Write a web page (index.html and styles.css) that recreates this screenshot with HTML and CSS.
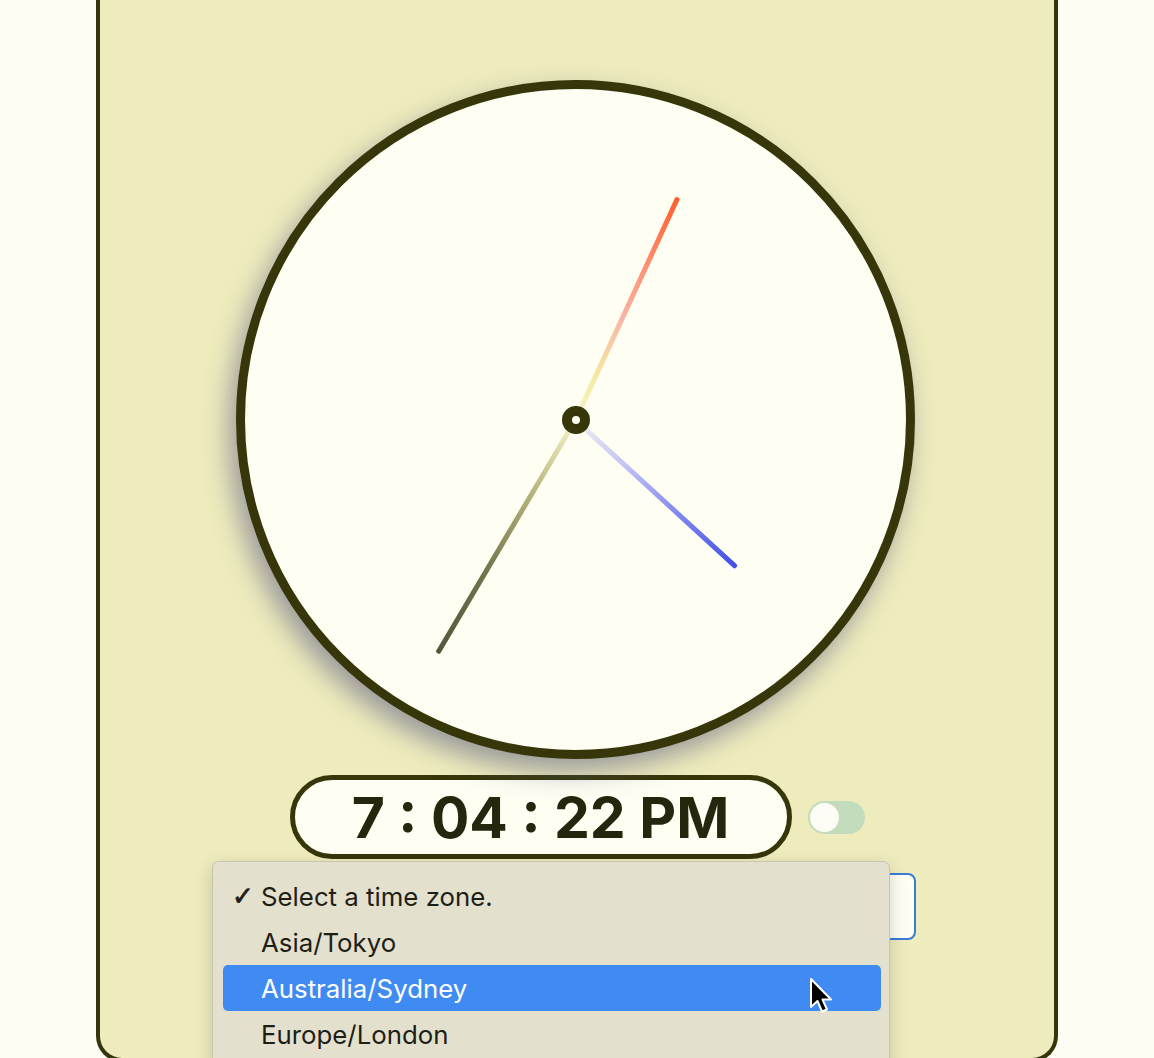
FILE: index.html
```html
<!DOCTYPE html>
<html lang="en">
<head>
<meta charset="utf-8">
<title>World Clock</title>
<link rel="stylesheet" href="styles.css">
</head>
<body>
  <main class="card">
    <div class="clock">
      <div class="hand hand-hour" style="height:271px; transform:rotate(210.6deg)"></div>
      <div class="hand hand-minute" style="height:245px; transform:rotate(24.7deg)"></div>
      <div class="hand hand-second" style="height:218px; transform:rotate(132.5deg)"></div>
      <div class="pivot"></div>
    </div>

    <div class="readout-row">
      <div class="readout">7 : 04 : 22 PM</div>
      <div class="toggle"><span class="knob"></span></div>
    </div>

    <div class="select-wrap">
      <div class="select" aria-label="Select a time zone."></div>
      <div class="menu">
        <div class="menu-item"><span class="check">✓</span>Select a time zone.</div>
        <div class="menu-item"><span class="check"></span>Asia/Tokyo</div>
        <div class="menu-item is-active"><span class="check"></span>Australia/Sydney</div>
        <div class="menu-item"><span class="check"></span>Europe/London</div>
        <svg class="cursor" width="24" height="38" viewBox="0 0 24 38">
          <path d="M2 2 L2 30 L8.5 24 L13 34.5 L18 32.5 L13.5 22.5 L22 22.5 Z" fill="#000" stroke="#fff" stroke-width="2" stroke-linejoin="round"/>
        </svg>
      </div>
    </div>
  </main>
</body>
</html>
```

FILE: styles.css
```css
html, body {
  margin: 0;
  padding: 0;
  overflow: hidden;
}

body {
  background: #fdfdf3;
  font-family: Inter, "Noto Sans", "Liberation Sans", sans-serif;
  color: #2a2a12;
}

.card {
  box-sizing: border-box;
  width: 962px;
  height: 1062px;
  margin: 0 auto;
  padding-top: 80px;
  background: #eeecbd;
  border: 4px solid #35350c;
  border-top: 0;
  border-radius: 0 0 26px 26px;
  display: flex;
  flex-direction: column;
  align-items: center;
}

.clock {
  position: relative;
  box-sizing: border-box;
  width: 679px;
  height: 679px;
  margin-left: -3px;
  border-radius: 50%;
  border: 9px solid #36360a;
  background: #fefef2;
  box-shadow: -7px 12px 26px rgba(85, 85, 125, 0.55);
  flex-shrink: 0;
}

.hand {
  position: absolute;
  left: 50%;
  bottom: 50%;
  width: 5px;
  margin-left: -2.5px;
  transform-origin: 50% 100%;
  border-radius: 2px;
}

.hand-hour {
  background: linear-gradient(to bottom, #55553c 0%, #74744f 35%, #b9b77e 70%, rgba(242, 236, 160, 0.5) 100%);
}

.hand-minute {
  background: linear-gradient(to bottom, #ff5d2e 0%, #ff8f6e 30%, #f9b6a8 55%, #f5e9a0 80%, rgba(245, 236, 160, 0.5) 100%);
}

.hand-second {
  background: linear-gradient(to bottom, #3f4ee6 0%, #7d86ee 35%, #c4c6f2 70%, rgba(225, 225, 245, 0.5) 100%);
}

.pivot {
  position: absolute;
  left: 50%;
  top: 50%;
  box-sizing: border-box;
  width: 28px;
  height: 28px;
  margin: -14px 0 0 -14px;
  border-radius: 50%;
  border: 10px solid #36360a;
  background: #fefef2;
}

.readout-row {
  display: flex;
  align-items: center;
  gap: 16px;
  margin-top: 16px;
}

.readout {
  box-sizing: border-box;
  width: 502px;
  height: 84px;
  border: 5px solid #36360a;
  border-radius: 42px;
  background: #fefef2;
  display: flex;
  align-items: center;
  justify-content: center;
  font-family: Inter, "Liberation Sans", sans-serif;
  font-weight: 700;
  font-size: 57px;
  color: #26260e;
}

.toggle {
  box-sizing: border-box;
  width: 57px;
  height: 33px;
  border-radius: 17px;
  background: #c3dcbc;
  padding: 2px;
  display: flex;
  align-items: center;
}

.knob {
  width: 29px;
  height: 29px;
  border-radius: 50%;
  background: #fdfdf6;
}

.select-wrap {
  position: relative;
  margin-top: 14px;
}

.select {
  box-sizing: border-box;
  width: 678px;
  height: 67px;
  border: 2px solid #3a7bd6;
  border-radius: 8px;
  background: #fefef2;
}

.menu {
  position: absolute;
  left: -26px;
  top: -12px;
  box-sizing: border-box;
  width: 678px;
  padding: 11px 8px 11px 10px;
  background: #e3e1cd;
  border: 1px solid #c8c6b2;
  border-radius: 7px;
  box-shadow: 0 6px 18px rgba(0, 0, 0, 0.18);
  font-family: Inter, "Noto Sans", "Liberation Sans", sans-serif;
  font-size: 25.8px;
  color: #1e1e16;
}

.menu-item {
  display: flex;
  align-items: center;
  height: 46px;
  border-radius: 5px;
}

.menu-item.is-active {
  background: #3f8bf2;
  color: #ffffff;
}

.check {
  box-sizing: border-box;
  width: 38px;
  padding-left: 9px;
  font-size: 26px;
  font-family: "DejaVu Sans", sans-serif;
  -webkit-text-stroke: 0.8px #1e1e16;
}

.cursor {
  position: absolute;
  left: 596px;
  top: 115px;
}
```
